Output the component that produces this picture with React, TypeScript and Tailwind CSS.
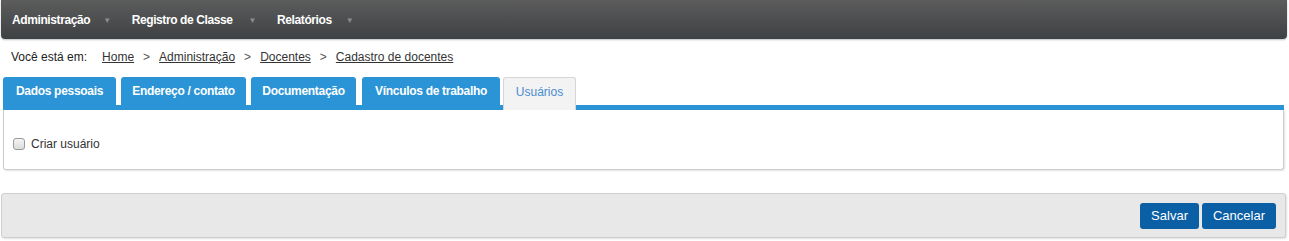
import React from "react";

const menus = [
  { label: "Administração", arrow: "ml-[13px]" },
  { label: "Registro de Classe", arrow: "ml-[16px]" },
  { label: "Relatórios", arrow: "ml-[14px]" },
];
const tabs = [
  { label: "Dados pessoais", w: "w-[113px]" },
  { label: "Endereço / contato", w: "w-[125px]" },
  { label: "Documentação", w: "w-[105px]" },
  { label: "Vínculos de trabalho", w: "w-[138px]" },
];
const crumbs = ["Home", "Administração", "Docentes", "Cadastro de docentes"];

export default function App() {
  return (
    <div className="h-[241px] w-[1289px] bg-white text-[12px] text-[#333] [font-family:'Liberation_Sans',Arial,sans-serif]">
      <nav className="mx-[1px] flex h-[39px] w-[1286px] items-center rounded-b-[4px] bg-gradient-to-b from-[#5c5c5c] to-[#3e4143] pl-[11px] shadow-[0_1px_2px_rgba(0,0,0,0.25)]">
        {menus.map((m) => (
          <div key={m.label} className="mr-[21px] flex items-center font-bold tracking-[-0.4px] text-white">
            <span>{m.label}</span>
            <span className={`${m.arrow} mt-[2px] text-[8px] text-[#8a8d90]`}>▼</span>
          </div>
        ))}
      </nav>

      <div className="flex h-[36px] items-center pl-[11px] text-[12px] text-[#222]">
        <span className="mr-[15px]">Você está em:</span>
        {crumbs.map((c, i) => (
          <React.Fragment key={c}>
            {i > 0 && <span className="mx-[9px] text-[#555]">&gt;</span>}
            <a className="text-[#333] underline">{c}</a>
          </React.Fragment>
        ))}
      </div>

      <div className="mx-[3px] mt-[2px] w-[1281px]">
        <div className="flex h-[33px] items-end border-b-[5px] border-[#2a94d6]">
          {tabs.map((t, i) => (
            <div
              key={t.label}
              className={`${t.w} ${i === 3 ? "ml-[6px]" : i > 0 ? "ml-[5px]" : ""} flex h-[28px] items-center justify-center rounded-t-[3px] bg-[#2a94d6] font-bold tracking-[-0.3px] text-white`}
            >
              {t.label}
            </div>
          ))}
          <div className="-mb-[5px] ml-[3px] flex h-[33px] w-[73px] items-center justify-center rounded-t-[3px] border border-b-0 border-[#d5d5d5] bg-[#f3f3f3] pb-[5px] text-[#4a8cd0]">
            Usuários
          </div>
        </div>
        <div className="flex h-[60px] items-center rounded-b-[3px] border border-t-0 border-[#ccc] pl-[9px] pt-[9px] shadow-[1px_1px_2px_rgba(0,0,0,0.12)]">
          <span className="mr-[6px] inline-block h-[12px] w-[12px] rounded-[3px] border border-[#9a9a9a] bg-gradient-to-b from-[#f4f4f4] to-[#dcdcdc]" />
          <span>Criar usuário</span>
        </div>
      </div>

      <div className="mx-[1px] mt-[23px] flex h-[45px] w-[1285px] items-center justify-end gap-[3px] rounded-[3px] border border-[#cfcfcf] bg-[#e8e8e8] pr-[9px] shadow-[1px_1px_2px_rgba(0,0,0,0.12)]">
        <button className="h-[26px] rounded-[3px] bg-[#0b5fa5] px-[11px] text-[13px] text-white">Salvar</button>
        <button className="h-[26px] rounded-[3px] bg-[#0b5fa5] px-[11px] text-[13px] text-white">Cancelar</button>
      </div>
    </div>
  );
}
